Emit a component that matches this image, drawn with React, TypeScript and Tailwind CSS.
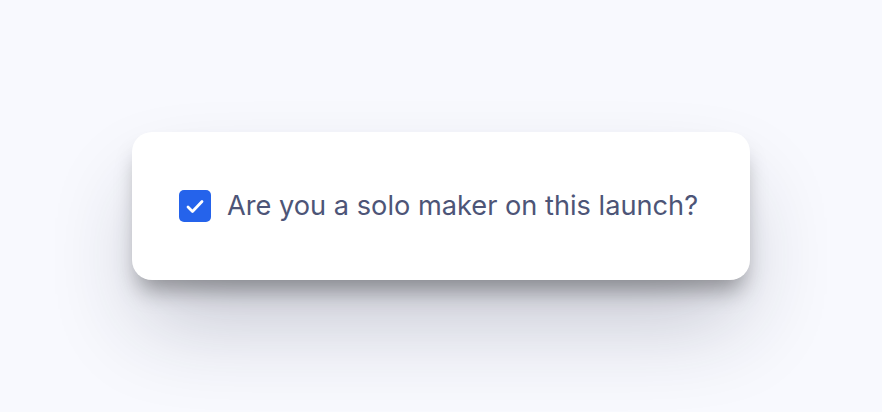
import { useState } from "react";

function Checkbox({ checked, onChange }: { checked: boolean; onChange: () => void }) {
  return (
    <button
      type="button"
      role="checkbox"
      aria-checked={checked}
      onClick={onChange}
      className={`flex h-8 w-8 shrink-0 items-center justify-center rounded-[5px] ${
        checked ? "bg-[#2563eb]" : "border-2 border-slate-300 bg-white"
      }`}
    >
      {checked && (
        <svg width="32" height="32" viewBox="0 0 32 32" fill="none">
          <path
            d="M9 17l4.5 4.5L23 11.5"
            stroke="white"
            strokeWidth="2.8"
            strokeLinecap="round"
            strokeLinejoin="round"
          />
        </svg>
      )}
    </button>
  );
}

export default function App() {
  const [solo, setSolo] = useState(true);

  return (
    <div className="flex h-[412px] w-full items-center justify-center bg-[#f8f9fe] font-['Inter',sans-serif]">
      <div className="flex h-[148px] w-[618px] items-center gap-4 rounded-[20px] bg-white pl-[47px] shadow-[0_16px_22px_-6px_rgba(0,0,0,0.34),0_50px_90px_-10px_rgba(30,35,60,0.24)]">
        <Checkbox checked={solo} onChange={() => setSolo(!solo)} />
        <span className="text-[27.2px] leading-8 text-[#4d5577]">
          Are you a solo maker on this launch?
        </span>
      </div>
    </div>
  );
}
